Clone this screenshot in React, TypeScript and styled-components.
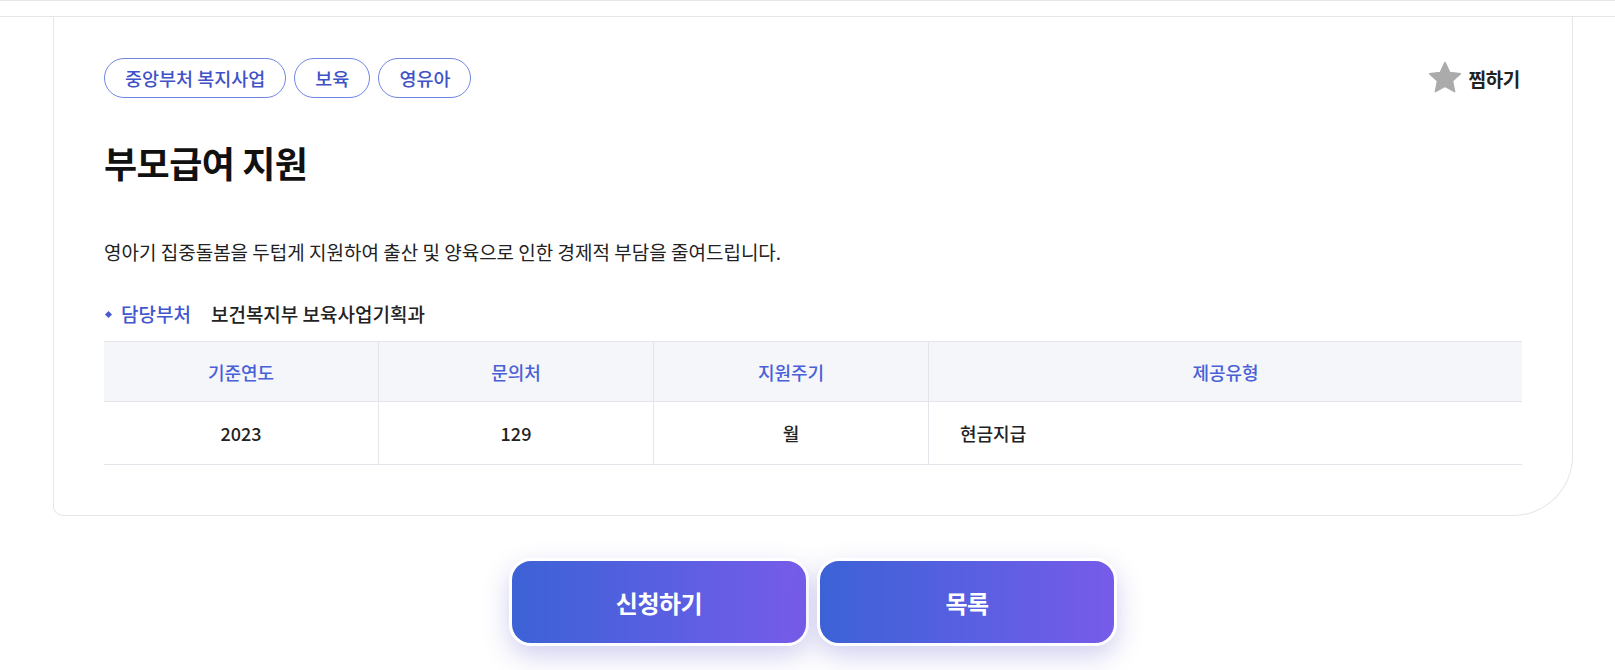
import React from "react";
import styled, { createGlobalStyle } from "styled-components";

const Global = createGlobalStyle`
  html, body { margin: 0; padding: 0; background: #ffffff; }
  body { font-family: "Noto Sans CJK KR", "Noto Sans", sans-serif; color: #222; }
  * { box-sizing: border-box; }
`;

const TopBar = styled.div`
  height: 17px;
  border-top: 1px solid #e6e6e6;
  border-bottom: 1px solid #e6e6e6;
`;

const Wrapper = styled.div`
  width: 1520px;
  margin-left: 53px;
`;

const Card = styled.section`
  border: 1px solid #e6e6e6;
  border-top: none;
  border-radius: 0 0 60px 10px;
  padding: 41px 50px 50px 50px;
  background: #fff;
`;

const TopRow = styled.div`
  display: flex;
  align-items: center;
  justify-content: space-between;
  height: 40px;
`;

const Tags = styled.div`
  display: flex;
  gap: 8px;
`;

const Tag = styled.span`
  display: inline-flex;
  align-items: center;
  height: 40px;
  padding: 0 20px;
  border: 1px solid #6f86e4;
  border-radius: 20px;
  color: #3f52c8;
  font-size: 18.5px;
  font-weight: 500;
`;

const Fav = styled.button`
  display: flex;
  align-items: center;
  gap: 6px;
  border: none;
  background: none;
  padding: 0;
  margin-right: 2px;
  font-family: inherit;
  font-size: 19px;
  font-weight: 700;
  color: #222;
  letter-spacing: -0.3px;
  cursor: pointer;
`;

const Title = styled.h1`
  margin: 40px 0 0 0;
  font-size: 36px;
  line-height: 48px;
  font-weight: 700;
  color: #111;
  letter-spacing: -0.5px;
`;

const Desc = styled.p`
  margin: 52px 0 0 0;
  font-size: 19px;
  line-height: 27px;
  color: #222;
`;

const DeptRow = styled.div`
  margin-top: 36px;
  display: flex;
  align-items: center;
  font-size: 19px;
  line-height: 26px;
`;

const Bullet = styled.span`
  width: 5px;
  height: 5px;
  background: #4a5bd0;
  transform: rotate(45deg);
  margin: 0 10px 0 2px;
`;

const DeptLabel = styled.span`
  color: #4256cf;
  font-weight: 500;
  margin-right: 20px;
`;

const DeptValue = styled.span`
  color: #222;
  font-weight: 500;
`;

const Table = styled.div`
  margin-top: 14px;
  display: grid;
  grid-template-columns: 275px 275px 275px 1fr;
  border-top: 1px solid #e3e5ea;
`;

const HeadCell = styled.div<{ $last?: boolean }>`
  height: 60px;
  display: flex;
  align-items: center;
  justify-content: center;
  background: #f5f6fa;
  border-bottom: 1px solid #e3e5ea;
  border-right: ${(p) => (p.$last ? "none" : "1px solid #e3e5ea")};
  color: #4a60d6;
  font-size: 18px;
  font-weight: 500;
`;

const BodyCell = styled.div<{ $last?: boolean; $left?: boolean }>`
  height: 63px;
  display: flex;
  align-items: center;
  justify-content: ${(p) => (p.$left ? "flex-start" : "center")};
  padding-left: ${(p) => (p.$left ? "31px" : "0")};
  border-bottom: 1px solid #e3e5ea;
  border-right: ${(p) => (p.$last ? "none" : "1px solid #e3e5ea")};
  color: #222;
  font-size: 18px;
  font-weight: 500;
`;

const Buttons = styled.div`
  display: flex;
  justify-content: center;
  gap: 8px;
  margin-top: 42px;
  padding-bottom: 24px;
`;

const ActionButton = styled.button`
  width: 300px;
  height: 88px;
  border: 3px solid #fff;
  border-radius: 22px;
  background: linear-gradient(90deg, #3c62d6 0%, #5b5fe2 55%, #775be9 100%);
  box-shadow: 0 10px 26px rgba(88, 86, 200, 0.28);
  color: #fff;
  font-family: inherit;
  font-size: 24px;
  font-weight: 700;
  letter-spacing: -0.5px;
  cursor: pointer;
`;

const Star = () => (
  <svg width="34" height="34" viewBox="0 0 24 24" aria-hidden="true">
    <path
      d="M12 1l3.3 7 7.6.9-5.6 5.2 1.5 7.6L12 17.9l-6.8 3.8 1.5-7.6L1.1 8.9l7.6-.9z"
      fill="#ababab"
      stroke="#ababab"
      strokeWidth="1"
      strokeLinejoin="round"
    />
  </svg>
);

export default function App() {
  const heads = ["기준연도", "문의처", "지원주기", "제공유형"];
  return (
    <>
      <Global />
      <TopBar />
      <Wrapper>
        <Card>
          <TopRow>
            <Tags>
              <Tag>중앙부처 복지사업</Tag>
              <Tag>보육</Tag>
              <Tag>영유아</Tag>
            </Tags>
            <Fav>
              <Star />
              찜하기
            </Fav>
          </TopRow>
          <Title>부모급여 지원</Title>
          <Desc>영아기 집중돌봄을 두텁게 지원하여 출산 및 양육으로 인한 경제적 부담을 줄여드립니다.</Desc>
          <DeptRow>
            <Bullet />
            <DeptLabel>담당부처</DeptLabel>
            <DeptValue>보건복지부 보육사업기획과</DeptValue>
          </DeptRow>
          <Table>
            {heads.map((h, i) => (
              <HeadCell key={h} $last={i === heads.length - 1}>
                {h}
              </HeadCell>
            ))}
            <BodyCell>2023</BodyCell>
            <BodyCell>129</BodyCell>
            <BodyCell>월</BodyCell>
            <BodyCell $last $left>
              현금지급
            </BodyCell>
          </Table>
        </Card>
        <Buttons>
          <ActionButton>신청하기</ActionButton>
          <ActionButton>목록</ActionButton>
        </Buttons>
      </Wrapper>
    </>
  );
}
